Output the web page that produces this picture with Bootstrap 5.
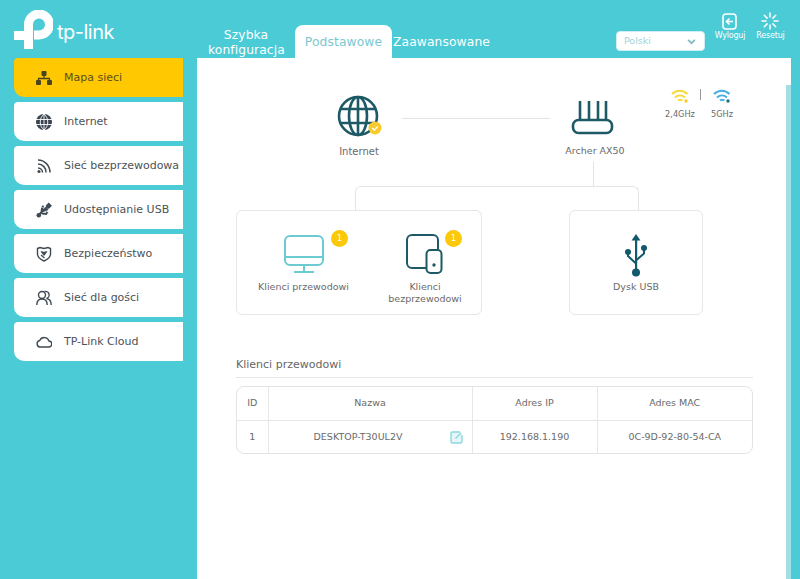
<!DOCTYPE html>
<html lang="pl">
<head>
<meta charset="utf-8">
<title>TP-Link Archer AX50</title>
<link href="https://cdn.jsdelivr.net/npm/bootstrap@5.3.0/dist/css/bootstrap.min.css" rel="stylesheet">
<style>
html,body{height:100%;}
body{background:#4acbd6;font-family:"DejaVu Sans",sans-serif;color:#666;overflow:hidden;font-size:10px;}
.top-bar{height:58px;position:relative;}
.logo-box{width:197px;padding:10px 0 0 14px;gap:4px;}
.logo-word{font-family:"Inter","Noto Sans",sans-serif;font-size:20px;font-weight:400;color:#fff;letter-spacing:-.5px;line-height:1;margin-top:12px;}
.tab-row{height:58px;padding-left:11px;}
.tab-item{font-size:12.3px;line-height:15px;color:#fff;text-align:center;letter-spacing:.1px;}
.tab-first{width:76px;}
.tab-on{width:97px;height:33px;margin-left:11px;background:#fff;color:#7cc7cf;border-radius:8px 8px 0 0;padding-top:10px;}
.tab-last{margin-left:1px;padding-bottom:8px;}
.lang-pick{width:89px;height:20px;margin-left:126px;margin-bottom:7px;background-color:#fff;border:1px solid #cfeef1;border-radius:4px;padding:0 0 0 7px;font-family:"DejaVu Sans",sans-serif;font-size:9.5px;color:#9fd2d9;background-position:right 8px center;background-size:9px 9px;background-image:url("data:image/svg+xml,%3csvg xmlns='http://www.w3.org/2000/svg' viewBox='0 0 16 16'%3e%3cpath fill='none' stroke='%2380b9c0' stroke-width='3' d='M2 5l6 6 6-6'/%3e%3c/svg%3e");}
.act-btn{color:#fff;font-size:8px;letter-spacing:-.2px;text-align:center;line-height:10px;}
.act-one{width:32px;margin-left:9px;margin-bottom:17px;}
.act-two{width:31px;margin-left:9px;margin-bottom:17px;}
.act-btn svg{display:block;margin:0 auto 1px;}
.page-body{height:521px;}
.side-menu{width:183px;margin-right:14px;padding-left:14px;flex:none;}
.menu-row{height:39px;margin-bottom:5px;background:#fff;border-radius:4px 0 0 10px;color:#4c5257;font-size:11px;padding:1px 0 0 22px;}
.menu-row.is-active{background:#ffc800;color:#5b4f20;}
.menu-ico{width:16px;height:16px;margin-right:12px;flex:none;}
.work-panel{width:594px;background:#fff;position:relative;padding-left:39px;height:521px;}
.scroll-thumb{position:absolute;right:0;top:27px;bottom:0;width:5px;background:#a3dfe5;}
.map-top{height:152px;width:517px;position:relative;}
.map-node{position:absolute;text-align:center;font-size:9.500px;color:#6a6a6a;line-height:12px;}
.map-line{position:absolute;background:#e4e4e4;}
.link-frame{position:absolute;left:119px;top:128px;width:284px;height:24px;border:1px solid #e4e4e4;border-bottom:0;border-radius:6px 6px 0 0;}
.map-card{height:105px;border:1px solid #e6e6e6;border-radius:6px;position:relative;background:#fff;}
.card-wide{width:246px;margin-right:87px;}
.card-thin{width:134px;}
.map-client{position:absolute;top:23px;text-align:center;font-size:9.500px;line-height:11.500px;color:#6a6a6a;}
.num-dot{position:absolute;width:17px;height:17px;border-radius:50%;background:#fcc80a;color:#fff;font-size:8px;line-height:17px;text-align:center;}
.list-title{width:517px;margin-top:43px;font-size:11px;color:#666;height:20px;line-height:13px;border-bottom:1px solid #e6e6e6;}
.grid-wrap{width:517px;margin-top:8px;border:1px solid #e3e3e3;border-radius:8px;overflow:hidden;}
.grid-wrap .table{margin:0;font-size:9.500px;color:#6a6a6a;table-layout:fixed;}
.grid-wrap th,.grid-wrap td{font-weight:400;text-align:center;vertical-align:middle;padding:0;border-color:#e6e6e6;color:#6a6a6a;}
.grid-wrap th{height:33px;}
.grid-wrap td{height:33px;}
.grid-wrap th+th,.grid-wrap td+td{border-left:1px solid #e6e6e6;}
.grid-wrap tr:last-child td{border-bottom:0;}
.name-cell{position:relative;}
.edit-ico{position:absolute;right:9px;top:10px;}
</style>
</head>
<body>
<header class="top-bar d-flex">
  <div class="logo-box d-flex flex-shrink-0">
    <svg width="39" height="40" viewBox="0 0 39 40">
      <path fill="none" stroke="#fff" stroke-width="9" d="M14.500 39V14.500A10.500 10.500 0 1 1 25 25H20"/>
      <path fill="#fff" d="M0 21h12v9H0z"/>
    </svg>
    <span class="logo-word">tp-link</span>
  </div>
  <nav class="tab-row d-flex align-items-end flex-grow-1">
    <div class="tab-item tab-first">Szybka konfiguracja</div>
    <div class="tab-item tab-on">Podstawowe</div>
    <div class="tab-item tab-last">Zaawansowane</div>
    <select class="form-select lang-pick" aria-label="Język"><option>Polski</option></select>
    <div class="act-btn act-one">
      <svg width="15" height="17" viewBox="0 0 15 17"><rect x="1" y="1" width="13" height="15" rx="3" fill="none" stroke="#fff" stroke-width="1.600"/><path d="M11 8.500H5M7.500 5.500l-3 3 3 3" fill="none" stroke="#fff" stroke-width="1.600"/></svg>
      Wyloguj
    </div>
    <div class="act-btn act-two">
      <svg width="18" height="18" viewBox="0 0 18 18"><g stroke="#fff" stroke-width="1.500" stroke-linecap="round"><path d="M9 1v4M9 13v4M1 9h4M13 9h4M3.300 3.300l2.800 2.800M11.900 11.900l2.800 2.800M14.700 3.300l-2.800 2.800M6.100 11.900l-2.800 2.800"/></g></svg>
      Resetuj
    </div>
  </nav>
</header>
<div class="page-body d-flex">
  <aside class="side-menu">
    <div class="menu-row is-active d-flex align-items-center">
      <svg class="menu-ico" viewBox="0 0 16 16"><g fill="#4a4520"><rect x="5.500" y="1" width="5" height="5" rx="1"/><rect x="0" y="10" width="5" height="5" rx="1"/><rect x="11" y="10" width="5" height="5" rx="1"/></g><path d="M8 6v2.500M2.500 10V8.500h11V10" fill="none" stroke="#4a4520" stroke-width="1.300"/></svg>
      Mapa sieci
    </div>
    <div class="menu-row d-flex align-items-center">
      <svg class="menu-ico" viewBox="0 0 16 16"><circle cx="8" cy="8" r="8" fill="#3a444e"/><path d="M0 5.500h16M0 10.500h16M8 0v16M8 0C3 4 3 12 8 16M8 0c5 4 5 12 0 16" fill="none" stroke="#fff" stroke-width=".9"/></svg>
      Internet
    </div>
    <div class="menu-row d-flex align-items-center">
      <svg class="menu-ico" viewBox="0 0 16 16"><g fill="none" stroke="#3f4a54" stroke-width="1.500"><path d="M2 2c6.500 0 12 5.500 12 12.500"/><path d="M2 6c4.500 0 8 3.500 8 8.500"/><path d="M2 10c2.500 0 4.500 2 4.500 4.500"/></g><circle cx="3" cy="13.500" r="1.600" fill="#3f4a54"/></svg>
      Sieć bezprzewodowa
    </div>
    <div class="menu-row d-flex align-items-center">
      <svg class="menu-ico" viewBox="0 0 16 16"><path d="M3 13l5-6M5.500 10l.5-4M6 11.500l5 .5M7 9l5-2" fill="none" stroke="#3f4a54" stroke-width="2"/><circle cx="2.800" cy="13.200" r="2.300" fill="#3f4a54"/><path d="M5 5.500l2-2.500 1.500 2.500zM9.500 12.500l3-1.500-2-2z" fill="#3f4a54"/><rect x="10.500" y="1.500" width="4.500" height="4.500" fill="#3f4a54" transform="rotate(45 12.750 3.750)"/><path d="M8 8l4-4" stroke="#3f4a54" stroke-width="2.200"/></svg>
      Udostępnianie USB
    </div>
    <div class="menu-row d-flex align-items-center">
      <svg class="menu-ico" viewBox="0 0 16 16"><path d="M1.500 2.500l2.500-1 4 1 4-1 2.500 1V8c0 3.500-3 5.500-6.500 7C4.500 13.500 1.500 11.500 1.500 8z" fill="none" stroke="#3f4a54" stroke-width="1.400"/><path d="M4.500 5.500c1.300-.6 2.500-.3 3.500.6 1-.9 2.200-1.200 3.500-.6L8 10z" fill="#3f4a54"/><path d="M5 9l3.500 3" stroke="#3f4a54" stroke-width="1.200"/></svg>
      Bezpieczeństwo
    </div>
    <div class="menu-row d-flex align-items-center">
      <svg class="menu-ico" viewBox="0 0 16 16"><g fill="none" stroke="#3f4a54" stroke-width="1.400"><circle cx="6" cy="5" r="3.500"/><path d="M.8 15c0-4 2-6 5.200-6s5.200 2 5.200 6"/><path d="M8.500 1.500a3.500 3.500 0 0 1 2 7c3 .5 4.700 2.500 4.700 6.500"/></g></svg>
      Sieć dla gości
    </div>
    <div class="menu-row d-flex align-items-center">
      <svg class="menu-ico" viewBox="0 0 16 16"><path d="M4 13h8.500a3 3 0 0 0 .5-6A5 5 0 0 0 3.700 6.500 3.300 3.300 0 0 0 4 13z" fill="none" stroke="#3f4a54" stroke-width="1.400"/></svg>
      TP-Link Cloud
    </div>
  </aside>
  <main class="work-panel">
    <div class="scroll-thumb"></div>
    <div class="map-top">
      <div class="map-line" style="left:166px;top:60px;width:148px;height:1px"></div>
      <div class="map-line" style="left:357px;top:104px;width:1px;height:24px"></div>
      <div class="link-frame"></div>
      <div class="map-node" style="left:93px;top:37px;width:60px;font-size:10px">
        <svg class="d-block mx-auto mb-2" width="48" height="48" viewBox="0 0 48 48">
          <g fill="none" stroke="#1d5a66" stroke-width="2.600"><circle cx="23" cy="21" r="19"/><ellipse cx="23" cy="21" rx="9" ry="19"/><path d="M23 2v38M5 14h36M5 28h36"/></g>
          <circle cx="40" cy="33" r="6.500" fill="#f7cb2d"/><path d="M37.300 33l2 2 3.500-3.500" fill="none" stroke="#fff" stroke-width="1.300"/>
        </svg>
        <div style="margin-top:-5px">Internet</div>
      </div>
      <div class="map-node" style="left:317px;top:43px;width:80px">
        <svg class="d-block mx-auto" width="44" height="36" viewBox="0 0 44 36"><g fill="none" stroke="#1d5a66" stroke-width="2.600"><path d="M9 0v19M18 0v19M27 0v19M35 0v19"/><rect x="2" y="19" width="39" height="13" rx="5.500"/></g></svg>
        <div style="margin:8px 0 0 4px">Archer AX50</div>
      </div>
      <div class="map-node" style="left:424px;top:31px;width:40px;font-size:8.200px">
        <svg class="d-block mx-auto mb-1" width="18" height="15" viewBox="0 0 18 15"><g fill="none" stroke="#f7d93a" stroke-width="2"><path d="M1 5c4.500-4.500 11-4.500 15.500 0"/><path d="M4 8.500c3-2.800 7-2.800 10 0"/><path d="M7 11.500c1.500-1 3-1 4.500 0"/></g><circle cx="15" cy="12" r="1.700" fill="#f7c92c"/></svg>
        2,4GHz
      </div>
      <div class="map-line" style="left:464px;top:31px;width:1px;height:11px;background:#9a9a9a"></div>
      <div class="map-node" style="left:466px;top:31px;width:40px;font-size:8.200px">
        <svg class="d-block mx-auto mb-1" width="18" height="15" viewBox="0 0 18 15"><g fill="none" stroke="#46aee0" stroke-width="2"><path d="M1 5c4.500-4.500 11-4.500 15.500 0"/><path d="M4 8.500c3-2.800 7-2.800 10 0"/><path d="M7 11.500c1.500-1 3-1 4.500 0"/></g><circle cx="15" cy="12" r="1.700" fill="#1d6f8a"/></svg>
        5GHz
      </div>
    </div>
    <div class="d-flex">
      <div class="map-card card-wide">
        <div class="map-client" style="left:14px;width:105px">
          <svg class="d-block mx-auto" width="42" height="40" viewBox="0 0 42 40"><g fill="none" stroke="#6ccad3" stroke-width="2"><rect x="2" y="2" width="38" height="29" rx="5"/><path d="M2 23h38M21 31v6M11 38h20"/></g></svg>
          <div style="margin-top:7px">Klienci przewodowi</div>
        </div>
        <span class="num-dot" style="left:94px;top:19px">1</span>
        <div class="map-client" style="left:133px;width:110px">
          <svg class="d-block" style="margin-left:35px" width="38" height="40" viewBox="0 0 38 40"><g fill="none" stroke="#1d5a66" stroke-width="2"><path d="M23 34H7a5 5 0 0 1-5-5V6a5 5 0 0 1 5-5h21a5 5 0 0 1 5 5v9"/><rect x="21.500" y="16" width="15" height="23" rx="4" fill="#fff"/></g><circle cx="29" cy="31" r="1.700" fill="#1d5a66"/></svg>
          <div style="margin-top:7px">Klienci<br>bezprzewodowi</div>
        </div>
        <span class="num-dot" style="left:208px;top:19px">1</span>
      </div>
      <div class="map-card card-thin">
        <div class="map-client" style="left:0;right:0;top:22px">
          <svg class="d-block mx-auto" width="24" height="44" viewBox="0 0 24 44"><g fill="#125a6b"><path d="M12 1l4.500 6.500h-9z"/><rect x="11" y="6" width="2.200" height="32"/><circle cx="12" cy="39.500" r="4"/><circle cx="4" cy="19" r="3"/><circle cx="20" cy="15" r="3"/></g><path d="M4 20v3l8 7.500M20 16v4.500l-7.500 6.500" fill="none" stroke="#125a6b" stroke-width="2"/></svg>
          <div style="margin-top:4px">Dysk USB</div>
        </div>
      </div>
    </div>
    <div class="list-title">Klienci przewodowi</div>
    <div class="grid-wrap">
      <table class="table mb-0">
        <colgroup><col style="width:31px"><col style="width:204px"><col style="width:125px"><col></colgroup>
        <thead><tr><th>ID</th><th>Nazwa</th><th>Adres IP</th><th>Adres MAC</th></tr></thead>
        <tbody><tr><td>1</td>
          <td class="name-cell"><span style="margin-right:24px">DESKTOP-T30UL2V</span>
            <svg class="edit-ico" width="13" height="13" viewBox="0 0 13 13"><path d="M10 1H2.500A1.500 1.500 0 0 0 1 2.500v8A1.500 1.500 0 0 0 2.500 12h8a1.500 1.500 0 0 0 1.500-1.500V4" fill="#e4f6f8" stroke="#8bd7de" stroke-width="1.400"/><path d="M5.500 7.500L11 2" stroke="#8bd7de" stroke-width="1.400"/></svg></td>
          <td>192.168.1.190</td><td>0C-9D-92-80-54-CA</td></tr></tbody>
      </table>
    </div>
  </main>
</div>
<script src="https://cdn.jsdelivr.net/npm/bootstrap@5.3.0/dist/js/bootstrap.bundle.min.js"></script>
</body>
</html>
